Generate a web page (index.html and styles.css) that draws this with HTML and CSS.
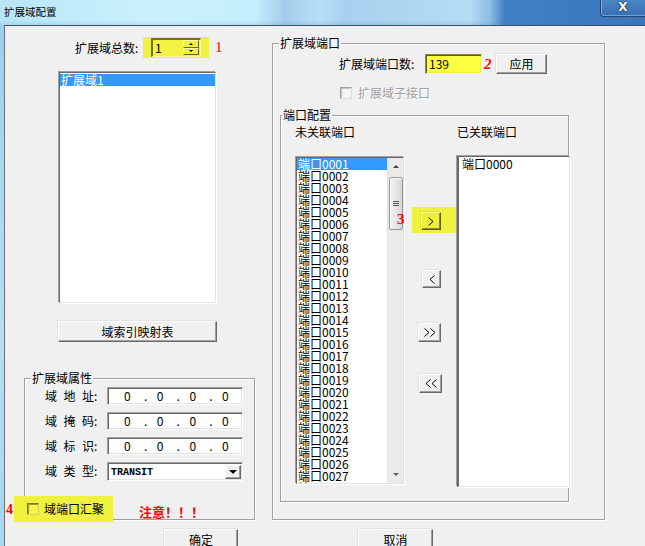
FILE: index.html
```html
<!DOCTYPE html>
<html lang="zh-CN">
<head>
<meta charset="utf-8">
<title>扩展域配置</title>
<link rel="stylesheet" href="styles.css">
</head>
<body>
<div class="window">
  <div class="titlebar">
    <span class="title">扩展域配置</span>
    <div class="close">X</div>
  </div>
  <div class="frame">
    <div class="frame-edge"></div>
    <div class="client">
      <div class="columns">
        <div class="col-left">
          <div class="count-row">
            <span class="count-label">扩展域总数:</span>
            <div class="hl hl-count">
              <div class="spin">
                <span class="spin-val">1</span>
                <div class="spin-btns"><span class="spin-up"></span><span class="spin-dn"></span></div>
              </div>
            </div>
            <span class="mark mark-1">1</span>
          </div>
          <div class="listbox domain-list"><div class="item sel">扩展域1</div></div>
          <button class="btn btn-map">域索引映射表</button>
          <div class="group group-attr">
            <div class="group-title">扩展域属性</div>
            <div class="attr-row first">
              <span class="attr-label"><span class="sp">域地</span>址:</span>
              <div class="field ipbox"><span class="d">0</span><span class="dot">.</span><span class="d">0</span><span class="dot">.</span><span class="d">0</span><span class="dot">.</span><span class="d">0</span></div>
            </div>
            <div class="attr-row">
              <span class="attr-label"><span class="sp">域掩</span>码:</span>
              <div class="field ipbox"><span class="d">0</span><span class="dot">.</span><span class="d">0</span><span class="dot">.</span><span class="d">0</span><span class="dot">.</span><span class="d">0</span></div>
            </div>
            <div class="attr-row">
              <span class="attr-label"><span class="sp">域标</span>识:</span>
              <div class="field ipbox"><span class="d">0</span><span class="dot">.</span><span class="d">0</span><span class="dot">.</span><span class="d">0</span><span class="dot">.</span><span class="d">0</span></div>
            </div>
            <div class="attr-row">
              <span class="attr-label"><span class="sp">域类</span>型:</span>
              <div class="field combo">
                <span class="combo-text">TRANSIT</span>
                <span class="combo-btn"><span class="tri-down"></span></span>
              </div>
            </div>
            <div class="agg-row">
              <span class="mark mark-4">4</span>
              <div class="hl hl-agg"><span class="checkbox cb-yellow"></span><span class="agg-text">域端口汇聚</span></div>
              <span class="warn">注意！！！</span>
            </div>
          </div>
        </div>
        <div class="col-right">
          <div class="group group-port">
            <div class="group-title">扩展域端口</div>
            <div class="port-count-row">
              <span class="pc-label">扩展域端口数:</span>
              <div class="field hl-edit">139</div>
              <span class="mark mark-2">2</span>
              <button class="btn btn-apply">应用</button>
            </div>
            <div class="sub-row">
              <span class="checkbox cb-disabled"></span>
              <span class="sub-text">扩展域子接口</span>
            </div>
            <div class="group group-inner">
              <div class="group-title">端口配置</div>
              <div class="headers">
                <span class="hdr-left">未关联端口</span>
                <span class="hdr-right">已关联端口</span>
              </div>
              <div class="lists">
                <div class="listbox port-list">
                  <div class="items">
                    <div class="item sel">端口0001</div>
                    <div class="item">端口0002</div>
                    <div class="item">端口0003</div>
                    <div class="item">端口0004</div>
                    <div class="item">端口0005</div>
                    <div class="item">端口0006</div>
                    <div class="item">端口0007</div>
                    <div class="item">端口0008</div>
                    <div class="item">端口0009</div>
                    <div class="item">端口0010</div>
                    <div class="item">端口0011</div>
                    <div class="item">端口0012</div>
                    <div class="item">端口0013</div>
                    <div class="item">端口0014</div>
                    <div class="item">端口0015</div>
                    <div class="item">端口0016</div>
                    <div class="item">端口0017</div>
                    <div class="item">端口0018</div>
                    <div class="item">端口0019</div>
                    <div class="item">端口0020</div>
                    <div class="item">端口0021</div>
                    <div class="item">端口0022</div>
                    <div class="item">端口0023</div>
                    <div class="item">端口0024</div>
                    <div class="item">端口0025</div>
                    <div class="item">端口0026</div>
                    <div class="item">端口0027</div>
                    <div class="item">端口0028</div>
                  </div>
                  <div class="scrollbar">
                    <div class="sb-btn"><span class="tri-up-s"></span></div>
                    <div class="sb-track"><div class="sb-thumb"><span class="grip"></span></div></div>
                    <div class="sb-btn"><span class="tri-down-s"></span></div>
                  </div>
                </div>
                <div class="btn-col">
                  <span class="mark mark-3">3</span>
                  <div class="hl hl-move">
                    <button class="btn btn-arrow btn-yellow btn-add"><svg width="6" height="9" viewBox="0 0 6 9"><polyline points="0.5,0.5 5,4.5 0.5,8.5" fill="none" stroke="#000" stroke-width="1"/></svg></button>
                  </div>
                  <button class="btn btn-arrow btn-remove"><svg width="6" height="9" viewBox="0 0 6 9"><polyline points="5.5,0.5 1,4.5 5.5,8.5" fill="none" stroke="#000" stroke-width="1"/></svg></button>
                  <button class="btn btn-arrow btn-addall"><svg width="12" height="9" viewBox="0 0 12 9"><polyline points="0.5,0.5 5,4.5 0.5,8.5" fill="none" stroke="#000" stroke-width="1"/><polyline points="6.5,0.5 11,4.5 6.5,8.5" fill="none" stroke="#000" stroke-width="1"/></svg></button>
                  <button class="btn btn-arrow btn-removeall"><svg width="12" height="9" viewBox="0 0 12 9"><polyline points="5.5,0.5 1,4.5 5.5,8.5" fill="none" stroke="#000" stroke-width="1"/><polyline points="11.5,0.5 7,4.5 11.5,8.5" fill="none" stroke="#000" stroke-width="1"/></svg></button>
                </div>
                <div class="listbox assoc-list">
                  <div class="item">端口0000</div>
                </div>
              </div>
            </div>
          </div>
        </div>
      </div>
      <div class="dlg-buttons">
        <button class="btn btn-ok">确定</button>
        <button class="btn btn-cancel">取消</button>
      </div>
    </div>
  </div>
</div>
</body>
</html>
```

FILE: styles.css
```css
* { box-sizing: border-box; }
html, body { margin: 0; padding: 0; }
body {
  width: 645px;
  height: 546px;
  overflow: hidden;
  background: #f0f0f0;
  font-family: "Noto Sans CJK SC", "Noto Sans", sans-serif;
  font-size: 12px;
  line-height: 12px;
  color: #000;
}
.window { width: 645px; height: 546px; display: flex; flex-direction: column; }

/* title bar */
.titlebar {
  height: 25px;
  flex: none;
  display: flex;
  align-items: flex-start;
  background:
    linear-gradient(to bottom, rgba(255,255,255,0) 0, rgba(255,255,255,0) 20px, rgba(60,120,180,0.15) 25px),
    linear-gradient(to right, #b7e5f7 0px, #cbf2fc 150px, #c4eefb 255px, #a3cdec 285px, #b8dff5 320px, #a7d1ef 345px, #b5dcf4 470px, #8cbde4 490px, #3f80c6 505px, #3a76bc 645px);
}
.title { padding-left: 4px; line-height: 24px; font-size: 10.5px; color: #000; }
.close {
  margin-left: auto;
  width: 45px;
  height: 17px;
  border-left: 1px solid #25436a;
  border-bottom: 1px solid #25436a;
  border-radius: 0 0 0 4px;
  background: linear-gradient(#4b86c6, #3770b4);
  box-shadow: inset 1px 0 0 rgba(255,255,255,0.35), inset 0 -1px 0 rgba(255,255,255,0.3);
  color: #fff;
  font-family: "DejaVu Sans", sans-serif;
  font-weight: bold;
  font-size: 12px;
  line-height: 15px;
  text-align: center;
  text-shadow: 0 0 2px #1a2f4d, 0 0 1px #000;
}

.frame { flex: 1; display: flex; min-height: 0; }
.frame-edge { width: 4px; flex: none; background: linear-gradient(#9ccff0, #b5e0f7 60%, #a6d6f3); }
.client {
  flex: 1;
  background: #f0f0f0;
  border-top: 1px solid #3d5064;
  border-left: 1px solid #6e6e6e;
  display: flex;
  flex-direction: column;
}
.columns { display: flex; height: 494px; flex: none; }
.col-left { width: 267px; flex: none; display: flex; flex-direction: column; align-items: flex-start; }
.col-right { flex: 1; display: flex; flex-direction: column; align-items: flex-start; }

/* common controls */
.btn {
  font-family: "Noto Sans CJK SC", "Noto Sans", sans-serif;
  font-size: 12px;
  line-height: 12px;
  color: #000;
  background: #f0f0f0;
  border: 1px solid;
  border-color: #fff #696969 #696969 #fff;
  box-shadow: inset -1px -1px 0 #a0a0a0, -1px -1px 0 #e3e3e3;
  padding: 0;
  margin: 0;
  display: flex;
  align-items: center;
  justify-content: center;
}
.field {
  background: #fff;
  border: 1px solid;
  border-color: #a0a0a0 #fff #fff #a0a0a0;
  box-shadow: inset 1px 1px 0 #696969, inset -1px -1px 0 #e3e3e3;
}
.listbox {
  background: #fff;
  border: 1px solid;
  border-color: #696969 #e3e3e3 #e3e3e3 #696969;
  box-shadow: -1px -1px 0 #a0a0a0, 1px 1px 0 #fff;
  overflow: hidden;
}
.item { height: 12px; line-height: 12px; white-space: nowrap; padding-left: 1px; }
.item.sel { background: #3399ff; color: #fff; }
.hl { background: #f0f03e; }
.mark { color: #f00; font-family: "Liberation Serif", serif; font-size: 15px; line-height: 15px; }
.group {
  border: 1px solid #a0a0a0;
  box-shadow: inset 1px 1px 0 #fff, 1px 1px 0 #fff;
  display: flex;
  flex-direction: column;
  align-items: flex-start;
}
.group-title {
  margin-top: -7px;
  padding: 0 1px;
  background: #f0f0f0;
  height: 12px;
  line-height: 12px;
  white-space: nowrap;
}
.checkbox { width: 12px; height: 12px; flex: none; border: 1px solid; }

/* left column */
.count-row { margin-top: 11px; padding-left: 70px; display: flex; align-items: center; height: 21px; }
.count-label { width: 66px; white-space: nowrap; }
.hl-count { margin-left: 2px; width: 66px; height: 21px; padding: 1px 0 0 8px; }
.spin {
  width: 50px;
  height: 19px;
  border-style: solid;
  border-width: 2px 1px 1px 2px;
  border-color: #74741f #fbfb9c #fbfb9c #74741f;
  background: #f3f346;
  display: flex;
}
.spin-val { flex: 1; padding-left: 2px; line-height: 15px; }
.spin-btns { width: 17px; display: flex; flex-direction: column; padding: 0 1px 1px 0; }
.spin-btns span {
  flex: 1;
  border: 1px solid;
  border-color: #fcfc9e #66661c #66661c #fcfc9e;
  background: #eeee3e;
  display: flex;
  align-items: center;
  justify-content: center;
}
.spin-up::before { content: ""; border-left: 2px solid transparent; border-right: 2px solid transparent; border-bottom: 2px solid #000; }
.spin-dn::before { content: ""; border-left: 2px solid transparent; border-right: 2px solid transparent; border-top: 2px solid #000; }
.mark-1 { margin-left: 6px; }

.domain-list { margin: 14px 0 0 54px; width: 157px; height: 231px; }
.domain-list .item { margin-top: 1px; }
.btn-map { margin: 18px 0 0 53px; width: 159px; height: 21px; }

.group-attr { margin: 36px 0 0 19px; width: 231px; height: 142px; }
.group-attr .group-title { margin-left: 6px; }
.attr-row { display: flex; align-items: center; height: 18px; margin-top: 7px; padding-left: 20px; }
.attr-row.first { margin-top: 3px; }
.attr-label { width: 62px; white-space: nowrap; }
.sp { letter-spacing: 6.5px; }
.ipbox { width: 136px; height: 18px; display: flex; align-items: center; padding-left: 16px; }
.ipbox .d { width: 21px; }
.ipbox .dot { width: 13.5px; }
.combo { width: 136px; height: 19px; display: flex; align-items: stretch; padding: 2px 1px 1px 2px; }
.combo-text { flex: 1; font-family: "Liberation Mono", monospace; font-weight: bold; font-size: 10px; line-height: 15px; padding-left: 1px; }
.combo-btn {
  width: 16px;
  background: #f0f0f0;
  border: 1px solid;
  border-color: #fff #696969 #696969 #fff;
  box-shadow: inset -1px -1px 0 #a0a0a0;
  display: flex;
  align-items: center;
  justify-content: center;
}
.tri-down { width: 0; height: 0; border-left: 4px solid transparent; border-right: 4px solid transparent; border-top: 4px solid #000; }

.agg-row { margin: 16px 0 0 -20px; display: flex; align-items: center; height: 26px; }
.mark-4 { width: 9px; padding-left: 1px; font-weight: bold; font-size: 14px; }
.hl-agg { width: 99px; height: 26px; display: flex; align-items: center; padding-left: 13px; }
.cb-yellow { border-color: #7c7c24 #d8d85a #d8d85a #7c7c24; background: #f5f548; box-shadow: inset 1px 1px 0 #9a9a30; }
.agg-text { margin-left: 5px; white-space: nowrap; }
.warn { margin: 4px 0 0 26px; color: #f00; font-weight: bold; font-size: 13px; line-height: 13px; white-space: nowrap; }

/* right column */
.group-port { margin-top: 17px; width: 333px; height: 477px; }
.group-port > .group-title { margin-left: 6px; }
.port-count-row { margin-top: 5px; height: 20px; display: flex; align-items: center; padding-left: 66px; }
.pc-label { width: 86px; white-space: nowrap; }
.hl-edit {
  width: 57px;
  height: 20px;
  background: #ffff42;
  border-color: #8a8a2a #fff #fff #8a8a2a;
  box-shadow: inset 1px 1px 0 #5e5e1a, inset -1px -1px 0 #efef3e;
  padding-left: 3px;
  line-height: 17px;
}
.mark-2 { margin-left: 2px; width: 8px; font-weight: bold; font-style: italic; }
.btn-apply { margin-left: 4px; width: 51px; height: 20px; }
.sub-row { margin-top: 13px; padding-left: 67px; display: flex; align-items: center; height: 12px; }
.cb-disabled { border-color: #a0a0a0 #dcdcdc #dcdcdc #a0a0a0; background: #f4f4f4; box-shadow: inset 1px 1px 0 #c4c4c4; }
.sub-text { margin-left: 6px; color: #a0a0a0; text-shadow: 1px 1px 0 #fff; white-space: nowrap; }

.group-inner { margin: 16px 0 0 7px; width: 289px; height: 387px; }
.group-inner > .group-title { margin-left: 1px; }
.headers { margin-top: 5px; display: flex; padding-left: 14px; height: 12px; }
.hdr-left { width: 162px; }
.lists { margin-top: 19px; display: flex; align-items: flex-start; padding-left: 15px; }
.port-list { width: 108px; height: 327px; display: flex; }
.port-list .items { flex: 1; min-width: 0; overflow: hidden; }
.scrollbar { width: 16px; flex: none; display: flex; flex-direction: column; background: #eaeaea; border-left: 1px solid #e2e2e2; }
.sb-btn { height: 17px; flex: none; display: flex; align-items: center; justify-content: center; }
.tri-up-s { width: 0; height: 0; border-left: 3px solid transparent; border-right: 3px solid transparent; border-bottom: 3px solid #404040; }
.tri-down-s { width: 0; height: 0; border-left: 3px solid transparent; border-right: 3px solid transparent; border-top: 3px solid #606060; }
.sb-track { flex: 1; padding: 2px 0 0 1px; }
.sb-thumb {
  width: 14px;
  height: 53px;
  border: 1px solid #979797;
  border-radius: 2px;
  background: linear-gradient(to right, #f3f3f3, #e8e8e8 45%, #d6d6d6);
  box-shadow: inset 1px 1px 0 #fff;
  display: flex;
  align-items: center;
  justify-content: center;
}
.grip { width: 6px; height: 5px; background: repeating-linear-gradient(to bottom, #555 0, #555 1px, transparent 1px, transparent 2px); }

.btn-col { width: 53px; flex: none; position: relative; display: flex; flex-direction: column; align-items: flex-start; }
.mark-3 { position: absolute; left: -7px; top: 55px; font-weight: bold; }
.hl-move { margin: 50px 0 0 8px; width: 44px; height: 26px; padding: 5px 0 0 9px; }
.btn-arrow { width: 20px; height: 18px; }
.btn-yellow {
  background: #eeee3c;
  border-color: #fdfd9e #5e5e1a #5e5e1a #fdfd9e;
  box-shadow: inset -1px -1px 0 #8e8e28, -1px -1px 0 #e2e23a;
}
.btn-remove { margin: 37px 0 0 18px; width: 19px; }
.btn-addall { margin: 35px 0 0 14px; width: 23px; height: 19px; }
.btn-removeall { margin: 32px 0 0 15px; width: 23px; height: 19px; }
.btn-arrow svg { display: block; }

.assoc-list { margin-top: -1px; width: 113px; height: 331px; padding: 1px 0 0 3px; border-left-width: 2px; }
.assoc-list .item { padding-left: 0; }

/* bottom buttons */
.dlg-buttons { display: flex; margin-top: 9px; }
.btn-ok { margin-left: 159px; width: 74px; height: 21px; }
.btn-cancel { margin-left: 120px; width: 75px; height: 21px; }
```
